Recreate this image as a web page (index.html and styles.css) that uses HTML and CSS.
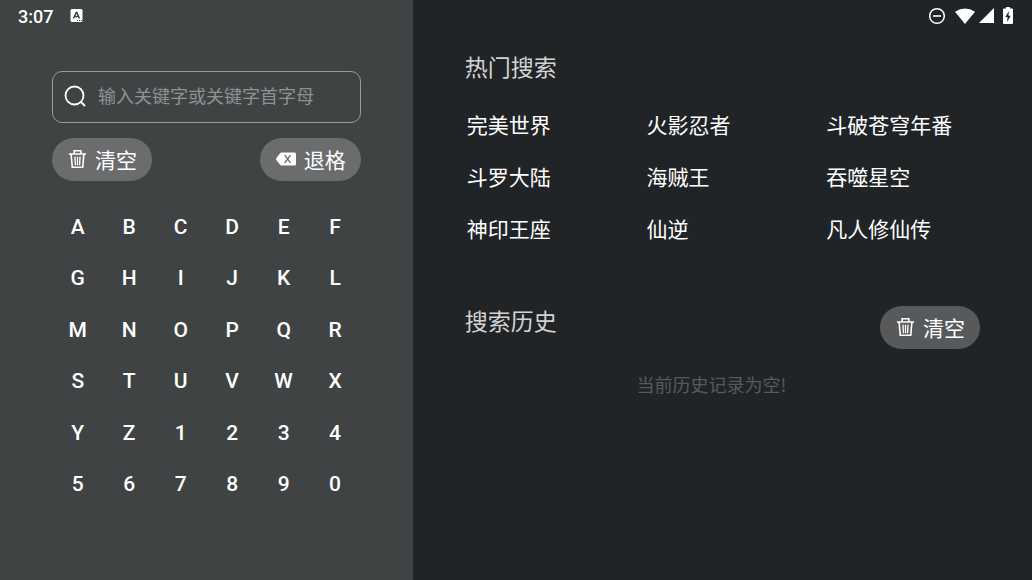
FILE: index.html
```html
<!DOCTYPE html>
<html lang="zh-Hans">
<head>
    <meta charset="UTF-8">
    <meta name="viewport" content="width=device-width, initial-scale=1.0">
    <title>搜索</title>
    <link rel="stylesheet" href="styles.css">
</head>
<body>
    <svg class="sprite" aria-hidden="true">
        <symbol id="icon-trash" viewBox="0 0 20 20">
            <path d="M1 4.800H19M6.500 4.500V1.300H13.500V4.500M3.300 5L4.500 18.700H15.500L16.700 5" fill="none" stroke="currentColor" stroke-width="1.700"/>
            <path d="M7.300 7.500L7.800 16.500M10 7.500V16.500M12.700 7.500L12.200 16.500" fill="none" stroke="currentColor" stroke-width="1.400"/>
        </symbol>
    </svg>

    <div class="page">
        <section class="keyboard-panel">
            <div class="status status-left">
                <time>3:07</time>
                <svg class="app-icon" viewBox="0 0 13 14">
                    <rect x="0.500" width="12" height="13" rx="1.500" fill="#fff"/>
                    <path d="M3.500 9.500L6.200 3.500H6.800L9.500 9.500M4.500 7.500H8.500" fill="none" stroke="#404344" stroke-width="1.500"/>
                    <path d="M7 11.500H12" stroke="#404344" stroke-width="1" stroke-dasharray="1 1"/>
                </svg>
            </div>

            <form class="search" id="form">
                <label for="keyword" aria-label="搜索">
                    <svg class="search-icon" viewBox="0 0 22 22">
                        <circle cx="10.500" cy="10.500" r="9" fill="none" stroke="#fff" stroke-width="1.800"/>
                        <path d="M16.500 16.500L21 21" stroke="#fff" stroke-width="2"/>
                    </svg>
                </label>
                <input type="text" id="keyword" name="keyword" placeholder="输入关键字或关键字首字母">
            </form>

            <div class="actions">
                <button type="button" class="pill" id="clear">
                    <svg class="icon"><use href="#icon-trash"/></svg>清空
                </button>
                <button type="button" class="pill" id="backspace">
                    <svg class="icon icon-wide" viewBox="0 0 20 14">
                        <path d="M5.500 0.500H18.500Q20 0.500 20 2V12Q20 13.500 18.500 13.500H5.500Q4.800 13.500 4.300 12.900L0.400 8Q-0.300 7 0.400 6L4.300 1.100Q4.800 0.500 5.500 0.500Z" fill="#fff"/>
                        <path d="M8.800 3.200L14.500 10.800M14.500 3.200L8.800 10.800" stroke="#6b6c6e" stroke-width="1.400"/>
                    </svg>退格
                </button>
            </div>

            <div class="keys">
                <button type="button">A</button>
                <button type="button">B</button>
                <button type="button">C</button>
                <button type="button">D</button>
                <button type="button">E</button>
                <button type="button">F</button>
                <button type="button">G</button>
                <button type="button">H</button>
                <button type="button">I</button>
                <button type="button">J</button>
                <button type="button">K</button>
                <button type="button">L</button>
                <button type="button">M</button>
                <button type="button">N</button>
                <button type="button">O</button>
                <button type="button">P</button>
                <button type="button">Q</button>
                <button type="button">R</button>
                <button type="button">S</button>
                <button type="button">T</button>
                <button type="button">U</button>
                <button type="button">V</button>
                <button type="button">W</button>
                <button type="button">X</button>
                <button type="button">Y</button>
                <button type="button">Z</button>
                <button type="button">1</button>
                <button type="button">2</button>
                <button type="button">3</button>
                <button type="button">4</button>
                <button type="button">5</button>
                <button type="button">6</button>
                <button type="button">7</button>
                <button type="button">8</button>
                <button type="button">9</button>
                <button type="button">0</button>
            </div>
        </section>

        <main class="result-panel">
            <div class="status status-right">
                <svg width="18" height="18" viewBox="0 0 18 18">
                    <circle cx="9" cy="9" r="7.300" fill="none" stroke="#fff" stroke-width="1.500"/>
                    <path d="M5 9H13" stroke="#fff" stroke-width="1.600"/>
                </svg>
                <svg class="wifi" width="20" height="16" viewBox="0 0 20 16">
                    <path d="M0 3.800Q10 -2.800 20 3.800L10 16Z" fill="#fff"/>
                </svg>
                <svg class="signal" width="15" height="15" viewBox="0 0 15 15">
                    <path d="M15 0V15H0Z" fill="#fff"/>
                </svg>
                <svg class="battery" width="10" height="17" viewBox="0 0 10 17">
                    <path d="M3 0H7V1.500H9Q10 1.500 10 2.500V16Q10 17 9 17H1Q0 17 0 16V2.500Q0 1.500 1 1.500H3Z" fill="#fff"/>
                    <path d="M6 4L2.300 10H4.600L4 15L7.700 8.800H5.400Z" fill="#212427"/>
                </svg>
            </div>

            <h2>热门搜索</h2>
            <div class="hot">
                <a href="#">完美世界</a>
                <a href="#">火影忍者</a>
                <a href="#">斗破苍穹年番</a>
                <a href="#">斗罗大陆</a>
                <a href="#">海贼王</a>
                <a href="#">吞噬星空</a>
                <a href="#">神印王座</a>
                <a href="#">仙逆</a>
                <a href="#">凡人修仙传</a>
            </div>

            <div class="history-head">
                <h2>搜索历史</h2>
                <button type="button" class="pill pill-dark" id="clearHistory">
                    <svg class="icon"><use href="#icon-trash"/></svg>清空
                </button>
            </div>
            <p class="empty">当前历史记录为空!</p>
        </main>
    </div>

    <script>
        const keyword = document.getElementById('keyword');

        // 點擊按鍵輸入字符
        document.querySelector('.keys').addEventListener('click', (event) => {
            if (event.target.tagName === 'BUTTON') {
                keyword.value += event.target.innerText;
            }
        });

        document.getElementById('clear').addEventListener('click', () => {
            keyword.value = '';
        });

        document.getElementById('backspace').addEventListener('click', () => {
            keyword.value = keyword.value.slice(0, -1);
        });

        document.getElementById('form').addEventListener('submit', (event) => {
            event.preventDefault();
        });
    </script>
</body>
</html>
```
FILE: styles.css
```css
* {
    box-sizing: border-box;
}
body {
    margin: 0;
    font-family: Roboto, "Noto Sans CJK SC", sans-serif;
    color: #fff;
    background-color: #212427;
}
button, input {
    font-family: inherit;
    color: inherit;
}
button {
    padding: 0;
    border: none;
    background: none;
    cursor: pointer;
}
.sprite {
    display: none;
}
.page {
    display: flex;
    min-height: 100vh;
}
.keyboard-panel {
    width: 40%;
    padding: 0 52px;
    background-color: #404344;
}
.result-panel {
    flex: 1;
    padding: 0 52px;
}

/* 狀態欄 */
.status {
    display: flex;
    align-items: center;
    height: 32px;
    margin: 0 -34px;
}
.status-left {
    gap: 17px;
    font-size: 18px;
    font-weight: 500;
}
.app-icon {
    width: 13px;
    height: 14px;
}
.status-right {
    justify-content: flex-end;
    height: 31px;
    padding-right: 1px;
}
.wifi {
    margin-left: 9px;
}
.signal {
    margin-left: 4px;
}
.battery {
    margin-left: 9px;
}

/* 搜索框 */
.search {
    display: flex;
    align-items: center;
    gap: 12px;
    height: 52px;
    margin-top: 39px;
    padding: 0 11px 2px;
    border: 1px solid #9a9b9d;
    border-radius: 10px;
}
.search label {
    display: flex;
}
.search-icon {
    width: 22px;
    height: 22px;
}
.search input {
    flex: 1;
    min-width: 0;
    padding: 0;
    border: none;
    outline: none;
    background: none;
    font-size: 18px;
}
.search input::placeholder {
    color: #909193;
    opacity: 1;
}
.actions {
    display: flex;
    justify-content: space-between;
    margin-top: 15px;
}
.pill {
    display: flex;
    align-items: center;
    gap: 8px;
    height: 43px;
    padding: 0 15px 2px 16px;
    border-radius: 22px;
    background-color: #6b6c6e;
    font-size: 21px;
}
.pill-dark {
    background-color: #58595b;
}
.icon {
    width: 19px;
    height: 20px;
}
.icon-wide {
    width: 20px;
    height: 14px;
}

/* 鍵盤 */
.keys {
    display: grid;
    grid-template-columns: repeat(6, 1fr);
    margin-top: 20px;
}
.keys button {
    aspect-ratio: 1;
    font-size: 21px;
    font-weight: 500;
}

h2 {
    margin: 0;
    font-size: 23px;
    font-weight: 400;
    line-height: 34px;
    color: #d3d3d4;
}
.result-panel > h2 {
    margin-top: 21px;
}
.hot {
    display: grid;
    grid-template-columns: repeat(3, 1fr);
    margin: 14px -26px 0 2px;
}
.hot a {
    font-size: 21px;
    line-height: 52px;
    color: inherit;
    text-decoration: none;
    white-space: nowrap;
}
.history-head {
    display: flex;
    justify-content: space-between;
    margin-top: 50px;
}
.empty {
    margin: 22px 22px 0 0;
    font-family: "Noto Sans CJK SC", sans-serif;
    font-size: 18px;
    line-height: 26px;
    text-align: center;
    color: #58595b;
}
```
